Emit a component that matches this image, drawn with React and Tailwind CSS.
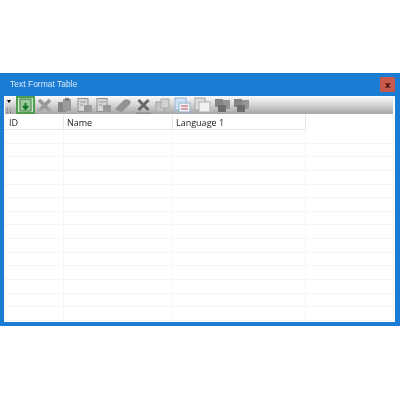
const tools = ["cut", "clip", "doc", "doc", "erase", "x", "ghost", "color", "pale", "stack", "stack"];

const ToolIcon = ({ kind }) => {
  if (kind === "cut") {
    return (
      <svg width="17" height="17" viewBox="0 0 17 17">
        <path d="M3 3l11 11M14 3L3 14" stroke="#989898" strokeWidth="3.5" />
        <circle cx="4" cy="13" r="2" fill="#a8a8a8" />
        <circle cx="13" cy="13" r="2" fill="#a8a8a8" />
      </svg>
    );
  }
  if (kind === "x") {
    return (
      <svg width="17" height="17" viewBox="0 0 17 17">
        <path d="M3.5 3l10 10M13.5 3l-10 10" stroke="#686868" strokeWidth="3" />
        <path d="M1 16h15" stroke="#828282" strokeWidth="1" />
      </svg>
    );
  }
  if (kind === "clip") {
    return (
      <svg width="17" height="17" viewBox="0 0 17 17">
        <rect x="2" y="5" width="8" height="10" fill="#878787" />
        <rect x="7" y="2" width="8" height="12" fill="#9a9a9a" />
        <rect x="9" y="1" width="4" height="3" fill="#7a7a7a" />
      </svg>
    );
  }
  if (kind === "erase") {
    return (
      <svg width="17" height="17" viewBox="0 0 17 17">
        <path d="M1 11l8-8c1-1 3-1 5 0s2 3 1 4l-7 7c-1 1-3 1-5 0s-3-2-2-3z" fill="#929292" />
      </svg>
    );
  }
  if (kind === "stack") {
    return (
      <svg width="17" height="17" viewBox="0 0 17 17">
        <rect x="7" y="3" width="9" height="9" fill="#959595" />
        <rect x="1" y="2" width="8" height="8" fill="#858585" />
        <rect x="4" y="8" width="8" height="7" fill="#6e6e6e" />
      </svg>
    );
  }
  if (kind === "color") {
    return (
      <svg width="17" height="17" viewBox="0 0 17 17">
        <rect x="1" y="1" width="11" height="12" fill="#cfe1f2" stroke="#8fb3d5" />
        <rect x="5" y="6" width="11" height="9" fill="#f3f3f6" stroke="#8fb3d5" />
        <path d="M7 9h7M7 12h7" stroke="#cc7f8c" strokeWidth="1.5" />
      </svg>
    );
  }
  if (kind === "pale") {
    return (
      <svg width="17" height="17" viewBox="0 0 17 17">
        <rect x="1" y="1" width="10" height="12" fill="#dcdcdc" stroke="#a5a5a5" />
        <rect x="5" y="5" width="11" height="10" fill="#f0f0f0" stroke="#afafaf" />
      </svg>
    );
  }
  if (kind === "ghost") {
    return (
      <svg width="17" height="17" viewBox="0 0 17 17">
        <rect x="2" y="5" width="8" height="10" fill="#c4c4c4" stroke="#a2a2a2" />
        <rect x="7" y="2" width="8" height="9" fill="#d2d2d2" stroke="#a8a8a8" />
      </svg>
    );
  }
  return (
    <svg width="17" height="17" viewBox="0 0 17 17">
      <rect x="2" y="1.5" width="10" height="13" fill="#d6d6d6" stroke="#909090" />
      <rect x="8" y="8" width="8" height="7" fill="#999999" />
      <path d="M4 5h6M4 8h3" stroke="#969696" />
    </svg>
  );
};

const App = () => {
  const rows = Array.from({ length: 14 });
  return (
    <div className="w-[400px] h-[400px] bg-white pt-[73px] font-['Open_Sans','Liberation_Sans',sans-serif]">
      <div className="h-[253px] bg-[#1a7cd3] pl-[4px] pr-[5px] pb-[4px] flex flex-col">
        <div className="h-[23px] flex items-center justify-between pl-[6px] shrink-0">
          <span className="text-[8.5px] leading-none font-['Liberation_Sans',sans-serif] text-[#d9e9f8] blur-[0.3px]">Text Format Table</span>
          <div className="w-[15px] h-[15px] bg-[#c5594c] flex items-center justify-center text-[9px] leading-none font-bold text-[#4a0b08]">
            x
          </div>
        </div>
        <div className="flex-1 bg-white flex flex-col min-h-0">
          <div className="h-[19px] shrink-0 pb-[1px] pl-[1px] pr-[2px]">
            <div className="h-[18px] flex items-center bg-gradient-to-b from-[#fbfbfb] via-[#d4d4d4] to-[#a6a6a6]">
              <div className="w-[11px] h-full shrink-0 flex flex-col items-start justify-between pl-[2px] pt-[4px] pb-[1px]">
                <div className="w-0 h-0 border-x-[2px] border-t-[3px] border-x-transparent border-t-black" />
                <div className="w-[4px] h-[5px] border-x border-dotted border-[#777]" />
              </div>
              <div className="w-[19px] h-[18px] shrink-0 border-2 border-[#4f9e4f] bg-[#cfe8cf] flex items-center justify-center blur-[0.4px]">
                <svg width="13" height="14" viewBox="0 0 13 14">
                  <rect x="1" y="1" width="11" height="12" fill="#9cc79c" stroke="#3f7f3f" />
                  <path d="M6.5 5v5M4 8l2.5 3L9 8" stroke="#0c7a20" strokeWidth="2" fill="none" />
                </svg>
              </div>
              {tools.map((kind, i) => (
                <div key={i} className="w-[19.7px] h-full shrink-0 flex items-center justify-center blur-[0.5px]">
                  <ToolIcon kind={kind} />
                </div>
              ))}
            </div>
          </div>
          <div className="flex h-[15px] shrink-0 text-[9px] text-[#222] leading-[15px] bg-white">
            <div className="w-[60px] pl-[5px] border-r border-b border-[#e6e6e6]"><span className="blur-[0.3px] inline-block">ID</span></div>
            <div className="w-[109px] pl-[3px] border-r border-b border-[#e6e6e6]"><span className="blur-[0.3px] inline-block">Name</span></div>
            <div className="w-[133px] pl-[3px] border-r border-b border-[#e6e6e6]"><span className="blur-[0.3px] inline-block">Language 1</span></div>
            <div className="flex-1" />
          </div>
          <div className="flex-1 overflow-hidden">
            {rows.map((_, i) => (
              <div key={i} className="flex h-[13.65px]">
                <div className="w-[60px] border-r border-b border-[#f5f5f5]" />
                <div className="w-[109px] border-r border-b border-[#f5f5f5]" />
                <div className="w-[133px] border-r border-b border-[#f5f5f5]" />
                <div className="flex-1 border-b border-[#f5f5f5]" />
              </div>
            ))}
          </div>
        </div>
      </div>
    </div>
  );
};

export default App;
